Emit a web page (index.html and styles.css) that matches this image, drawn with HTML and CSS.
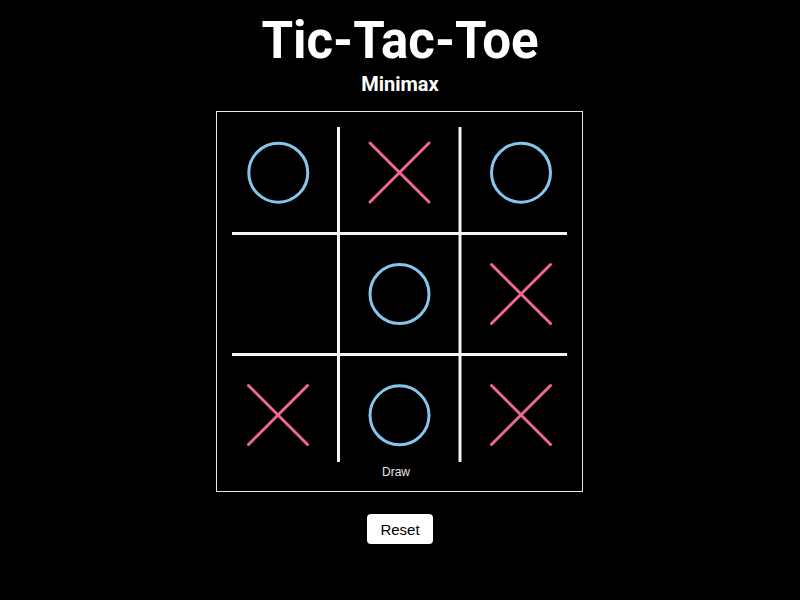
FILE: index.html
```html
<!DOCTYPE html>
<html lang="en">
<head>
<meta charset="utf-8">
<title>Tic-Tac-Toe</title>
<link rel="stylesheet" href="styles.css">
</head>
<body>
<main class="app">
  <h1 class="title">Tic-Tac-Toe</h1>
  <h2 class="subtitle">Minimax</h2>
  <div class="board">
    <svg class="grid" width="364" height="364" viewBox="0 0 364 364">
      <g class="lines">
        <line x1="121.5" y1="15" x2="121.5" y2="350"/>
        <line x1="243" y1="15" x2="243" y2="350"/>
        <line x1="15" y1="121.5" x2="350" y2="121.5"/>
        <line x1="15" y1="242.5" x2="350" y2="242.5"/>
      </g>
      <g class="o">
        <circle cx="61.3" cy="60.7" r="29.5"/>
        <circle cx="304" cy="60.7" r="29.5"/>
        <circle cx="182.5" cy="182" r="29.5"/>
        <circle cx="182.5" cy="303.3" r="29.5"/>
      </g>
      <g class="x">
        <path d="M153 31 L212 90 M212 31 L153 90"/>
        <path d="M274.5 152.5 L333.5 211.5 M333.5 152.5 L274.5 211.5"/>
        <path d="M31.5 273.5 L90.5 332.5 M90.5 273.5 L31.5 332.5"/>
        <path d="M274.5 273.5 L333.5 332.5 M333.5 273.5 L274.5 332.5"/>
      </g>
    </svg>
    <p class="status">Draw</p>
  </div>
  <button class="reset" type="button">Reset</button>
</main>
</body>
</html>
```
FILE: styles.css
```css
html, body {
  margin: 0;
  padding: 0;
  background: #000;
}

.app {
  display: flex;
  flex-direction: column;
  align-items: center;
  color: #fff;
  font-family: Roboto, "Liberation Sans", sans-serif;
}

.title {
  margin: 12px 0 0;
  font-size: 51px;
  line-height: 58px;
  font-weight: 700;
}

.subtitle {
  margin: 3px 0 0;
  font-size: 20px;
  line-height: 23px;
  font-weight: 700;
}

.board {
  margin: 15px 2px 0 0;
  width: 365px;
  border: 1px solid #e8e8e8;
  display: flex;
  flex-direction: column;
  align-items: flex-start;
  padding-bottom: 12px;
}

.grid {
  display: block;
}

.lines line {
  stroke: #f4f4f4;
  stroke-width: 3;
}

.o circle {
  fill: none;
  stroke: #86c5ec;
  stroke-width: 3;
}

.x path {
  fill: none;
  stroke: #ef6891;
  stroke-width: 3;
  stroke-linecap: round;
}

.status {
  align-self: stretch;
  margin: -11px 0 0;
  padding-right: 6px;
  text-align: center;
  font-family: "Liberation Sans", Arial, sans-serif;
  font-size: 12px;
  line-height: 14px;
  color: #e6e6e6;
}

.reset {
  margin-top: 22px;
  width: 66px;
  height: 30px;
  padding: 0;
  border: none;
  border-radius: 4px;
  background: #fff;
  color: #000;
  font-family: "Liberation Sans", Arial, sans-serif;
  font-size: 15px;
}
```
